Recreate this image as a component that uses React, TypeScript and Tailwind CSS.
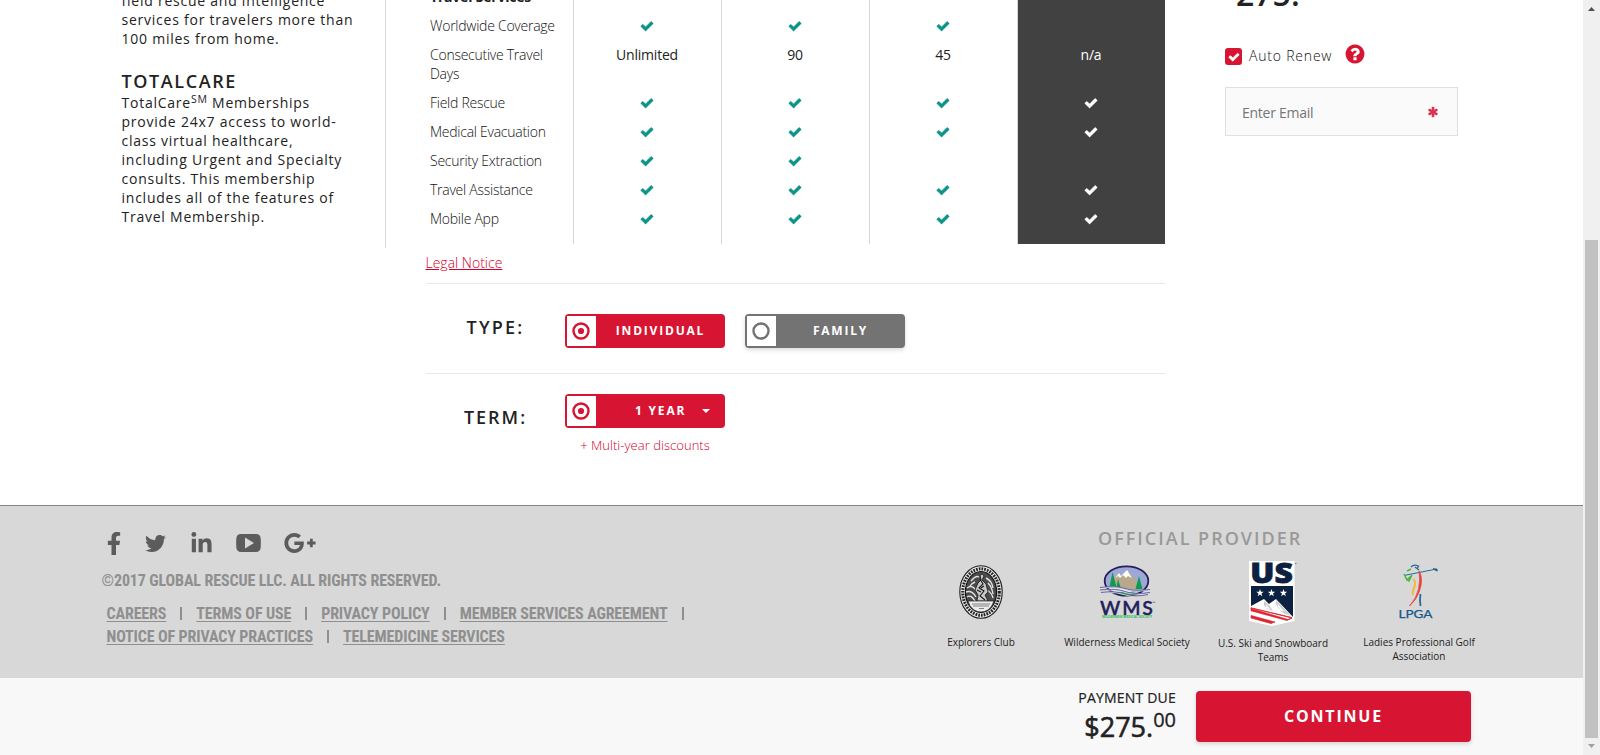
import React from 'react';
import { FaFacebookF, FaTwitter, FaLinkedinIn } from 'react-icons/fa';

const SANS = "font-['Open_Sans',sans-serif]";

function Check({ className, size = 14 }: { className: string; size?: number }) {
  return (
    <svg className={className} width={size} height={size} viewBox="0 0 1792 1792" fill="currentColor">
      <path d="M1671 566q0 40-28 68l-724 724-136 136q-28 28-68 28t-68-28l-136-136-362-362q-28-28-28-68t28-68l136-136q28-28 68-28t68 28l294 295 656-657q28-28 68-28t68 28l136 136q28 28 28 68z" stroke="currentColor" strokeWidth="60" />
    </svg>
  );
}

function Asterisk() {
  return (
    <svg width="12" height="12" viewBox="0 0 1792 1792" fill="#dc3450">
      <path d="M1546 1050q46 26 59.5 77.5t-12.5 97.5l-64 110q-26 46-77.5 59.5t-97.5-12.5l-266-153v307q0 52-38 90t-90 38h-128q-52 0-90-38t-38-90v-307l-266 153q-46 26-97.5 12.5t-77.5-59.5l-64-110q-26-46-12.5-97.5t59.500-77.500l266-154-266-154q-46-26-59.500-77.500t12.500-97.500l64-110q26-46 77.500-59.500t97.500 12.500l266 153v-307q0-52 38-90t90-38h128q52 0 90 38t38 90v307l266-153q46-26 97.500-12.500t77.500 59.500l64 110q26 46 12.500 97.500t-59.500 77.500l-266 154z" />
    </svg>
  );
}

function Question() {
  return (
    <svg width="22" height="22" viewBox="0 0 1792 1792" fill="#d71532">
      <path d="M1024 1376v-192q0-14-9-23t-23-9h-192q-14 0-23 9t-9 23v192q0 14 9 23t23 9h192q14 0 23-9t9-23zm256-672q0-88-55.5-163t-138.5-116-170-41q-243 0-371 213-15 24 8 42l132 100q7 6 19 6 16 0 25-12 53-68 86-92 34-24 86-24 48 0 85.500 26t37.500 59q0 38-20 61t-68 45q-63 28-115.500 86.500t-52.500 125.500v36q0 14 9 23t23 9h192q14 0 23-9t9-23q0-19 21.500-49.500t54.500-49.500q32-18 49-28.500t46-35 44.500-48 28-60.500 12.500-81zm384 192q0 209-103 385.500t-279.500 279.500-385.500 103-385.500-103-279.500-279.500-103-385.500 103-385.500 279.500-279.500 385.500-103 385.500 103 279.500 279.500 103 385.500z" />
    </svg>
  );
}

type Cell = boolean | string;
const rows: { label: string; cells: [Cell, Cell, Cell, Cell] }[] = [
  { label: 'Worldwide Coverage', cells: [true, true, true, false] },
  { label: 'Consecutive Travel Days', cells: ['Unlimited', '90', '45', 'n/a'] },
  { label: 'Field Rescue', cells: [true, true, true, true] },
  { label: 'Medical Evacuation', cells: [true, true, true, true] },
  { label: 'Security Extraction', cells: [true, true, false, false] },
  { label: 'Travel Assistance', cells: [true, true, true, true] },
  { label: 'Mobile App', cells: [true, true, true, true] },
];

function PlanTable() {
  const cellTone = [
    'border-l border-[#d8d8d8] text-[#222]',
    'border-l border-[#d8d8d8] text-[#222]',
    'border-l border-[#d8d8d8] text-[#222]',
    'border-l border-[#d8d8d8] bg-[#414141] text-white',
  ];
  const grid = 'grid grid-cols-[147px_148px_148px_148px_148px]';
  return (
    <div className="flex h-[244px] flex-col justify-end overflow-hidden text-[14px] leading-[19px]">
      <div className={grid + ' h-[28px] shrink-0'}>
        <div className="pt-[4px] pl-[4px] font-bold tracking-[-0.2px] text-[#222]">Travel Services</div>
        {cellTone.map((t, i) => <div key={i} className={t} />)}
      </div>
      {rows.map((r) => (
        <div key={r.label} className={grid + ' shrink-0'}>
          <div className="py-[5px] pr-2 pl-[4px] font-light tracking-[-0.26px] text-[#111]">{r.label}</div>
          {r.cells.map((c, i) => (
            <div key={i} className={cellTone[i] + ' flex justify-center py-[5px] pr-px tracking-[-0.2px]'}>
              {c === true ? (
                <Check className={i === 3 ? 'mt-[3px] text-white' : 'mt-[3px] text-[#0b9488]'} />
              ) : (
                c || null
              )}
            </div>
          ))}
        </div>
      ))}
      <div className={grid + ' h-[11px] shrink-0'}>
        <div />
        {cellTone.map((t, i) => <div key={i} className={t} />)}
      </div>
    </div>
  );
}

function Radio({ on }: { on: boolean }) {
  const color = on ? '#d71532' : '#737373';
  return (
    <span className="flex h-[30px] w-[29px] items-center pl-[5px] bg-white">
      <svg width="18" height="18" viewBox="0 0 18 18" fill="none">
        <circle cx="9" cy="9" r="7.500" stroke={color} strokeWidth="2.400" />
        {on && <circle cx="9" cy="9" r="3.100" fill={color} />}
      </svg>
    </span>
  );
}

function OptionButton({ label, on, caret }: { label: string; on: boolean; caret?: boolean }) {
  return (
    <button
      className={
        (on ? 'bg-[#d71532]' : 'bg-[#737373] shadow-[0_2px_4px_rgba(0,0,0,0.15)]') +
        ' flex h-[34px] w-[160px] items-center rounded-[4px] pl-[2px] text-[12px] font-bold tracking-[1.8px] text-white'
      }
    >
      <Radio on={on} />
      <span className={caret ? 'flex flex-1 items-center pl-[39px]' : 'flex-1 text-center'}>
        {label}
        {caret && (
          <svg className="ml-[16px]" width="8" height="4" viewBox="0 0 8 4">
            <path d="M0 0h8L4 4z" fill="#fff" />
          </svg>
        )}
      </span>
    </button>
  );
}

function FooterLink({ children, bar = true }: { children: string; bar?: boolean }) {
  return (
    <>
      <a className="whitespace-nowrap underline decoration-1 underline-offset-2">{children}</a>
      {bar && <span className="mx-[14px] h-[13px] w-[2px] shrink-0 bg-[#8f8f8f]" />}
    </>
  );
}

function ExplorersLogo() {
  return (
    <svg width="44" height="54" viewBox="0 0 44 54">
      <ellipse cx="22" cy="27" rx="21.2" ry="26.3" fill="#e6e6e6" stroke="#1c1c1c" strokeWidth="1.1" />
      <ellipse cx="22" cy="27" rx="18.3" ry="23.2" fill="none" stroke="#222" strokeWidth="3" strokeDasharray="1.7 1.1" />
      <ellipse cx="22" cy="27" rx="15.600" ry="20.500" fill="#4b4b4b" stroke="#111" strokeWidth="1.2" />
      <path d="M8 23q4-3 7 0t6 6M7 27q6-2 10 5M8 32q4-3 8 4M12 16q5-6 8-4M27 13q6 3 7 10M29 18q4 4 5 11M28 25q5 3 6 8M16 17q-4 2-5 4" stroke="#e4e4e4" strokeWidth="1.4" fill="none" />
      <path d="M21 10q3-2 4 1l-2 4 4 4 2 8-3 3 3 6H18l1-6-3-5 3-7 3-3z" fill="#c8c8c8" stroke="#161616" strokeWidth=".8" />
      <path d="M21 14l3 5-4 4 5 3-4 5 5 4M18 25l4 2M25 21l-3 2" stroke="#181818" strokeWidth="1.1" fill="none" />
      <path d="M9 36h26q-2 6-6 9-7 4-14 0-5-4-6-9z" fill="#ececec" stroke="#222" strokeWidth=".7" />
      <path d="M13 39h18M14 41h16M20 43.500h5" stroke="#666" strokeWidth=".8" />
    </svg>
  );
}

function WmsLogo() {
  return (
    <svg className="ml-[4px]" width="58" height="54" viewBox="0 0 58 54">
      <defs>
        <clipPath id="wmsOval"><ellipse cx="26.500" cy="16" rx="21.800" ry="14.700" /></clipPath>
      </defs>
      <g clipPath="url(#wmsOval)">
        <rect x="4" y="0" width="46" height="32" fill="#9ea8d6" />
        <path d="M11 24V17l7-9 3 3 6-6 8 9 3 7v4z" fill="#b9a98c" />
        <path d="M15 13l4-5 2 3 6-6 5 8-4-2-2 2-3-3-3 3-2-2z" fill="#fff" />
        <path d="M12.500 7l4 15h-7zM18 14l2.500 8h-4zM39 11l3.500 13h-7z" fill="#0d9b4e" />
        <path d="M4 22q16-2 24 3t22 0v8H4z" fill="#e8ebf3" />
        <path d="M14 27q12-1 24 1l-5 4H20z" fill="#1fc13c" />
      </g>
      <ellipse cx="26.500" cy="16" rx="21.800" ry="14.700" fill="none" stroke="#24205e" strokeWidth="1.800" />
      <path d="M0 23q16-2 25 1t25 1M0 25.500q16-2 25 1.500t25 1M1 28q14-2 24 1.500t23 .5" stroke="#d8d8e6" strokeWidth="1.400" fill="none" />
      <path d="M0 22.500q16-2 25 1t25 1M0 25q16-2 25 1.500t25 1M1 27.500q14-2 24 1.500t23 .5" stroke="#37347c" strokeWidth=".7" fill="none" />
      <text x="0" y="50" textLength="53" fontFamily="Lato, sans-serif" fontWeight="600" fontSize="19.500" fill="#24205e" stroke="#24205e" strokeWidth=".3">WMS</text>
      <text x="52.500" y="39" fontFamily="Open Sans, sans-serif" fontSize="3.500" fill="#24205e">™</text>
      <text x="2" y="53.400" textLength="50" lengthAdjust="spacingAndGlyphs" fontFamily="Open Sans, sans-serif" fontWeight="700" fontSize="3" fill="#20c050">WILDERNESS MEDICAL SOCIETY</text>
    </svg>
  );
}

function UsSkiLogo() {
  const star = 'M0-3.900L.95-1.250 3.700-1.200 1.500.5 2.300 3.200 0 1.600-2.300 3.200-1.500.5-3.700-1.200-.95-1.250z';
  return (
    <svg width="48" height="65" viewBox="0 0 48 65">
      <path d="M0 0h45.500v60L23 65 0 60z" fill="#fff" />
      <text x="1.300" y="22.300" textLength="42.500" lengthAdjust="spacingAndGlyphs" fontFamily="Open Sans, sans-serif" fontWeight="800" fontSize="28" fill="#0c2140" stroke="#0c2140" strokeWidth=".8">US</text>
      <path d="M46 2.500h1.500" stroke="#667" strokeWidth=".8" />
      <path d="M2 25h42v31L2 46z" fill="#0c2140" />
      <g fill="#fff">
        <path d={star} transform="translate(11 32)" />
        <path d={star} transform="translate(22.500 32)" />
        <path d={star} transform="translate(34.500 32)" />
      </g>
      <path d="M2 45l13-7 5 5 7-5 17 18v3L23 63 2 57z" fill="#fff" />
      <path d="M15 40l5 4 4 6-6-2-3-4zM27 39l15 16-8-3-5-5-2-4z" fill="#c9cac9" />
      <path d="M17 43l5 6-5-2zM28 42l8 9-6-2z" fill="#f6f6f6" />
      <path d="M2 47.500l37 11 4-2L2 46.800zM2 47l41 10-5 2.500L2 49.800zM2 54.500l24 6.500-4 1.500L2 57z" fill="#dc2430" stroke="#dc2430" strokeWidth=".7" />
    </svg>
  );
}

function LpgaLogo() {
  return (
    <svg className="ml-[2px]" width="42" height="56" viewBox="0 0 42 56" fill="none">
      <path d="M5 11.500L35 5.500" stroke="#26699a" strokeWidth="1" />
      <path d="M34 4.500l4 .5.5 2-2-.5z" fill="#185a8c" stroke="#185a8c" strokeWidth=".6" />
      <path d="M12 3q3-3 7-1M16 3l4 3M20 1.500l-2 3.500" stroke="#26699a" strokeWidth="1.200" />
      <path d="M8 7l4-2M5 10l3 6 4-4M7 14l3 3 3-6" stroke="#4db544" strokeWidth="1.500" />
      <path d="M14.500 15q3 4 .5 9-2 4-1 7" stroke="#f0bd38" strokeWidth="2" />
      <path d="M20.500 7q4 9 0 20-3 9-10 15 7-8 9-17 2-9 .5-18z" fill="#e9403a" stroke="#e9403a" strokeWidth=".7" />
      <path d="M21.500 30q-1 6 0 12" stroke="#26699a" strokeWidth="1.800" />
      <text x="-.5" y="53.500" textLength="34" lengthAdjust="spacingAndGlyphs" fontFamily="Lato, sans-serif" fontSize="10.800" fill="#15588c" stroke="#15588c" strokeWidth=".25">LPGA</text>
    </svg>
  );
}

function Partner({ logo, name, className = 'pt-0' }: { logo: React.ReactNode; name: string; className?: string }) {
  return (
    <div className={'flex w-[146px] flex-col items-center ' + className}>
      <div className="flex h-[70px] items-center">{logo}</div>
      <div className="mt-[8px] w-[130px] text-center text-[10px] leading-[14px] text-[#222]">{name}</div>
    </div>
  );
}

export default function App() {
  return (
    <div className={'flex h-[755px] w-[1600px] overflow-hidden bg-white text-[#222] ' + SANS}>
      <div className="flex w-[1583px] flex-col">
        <main className="flex h-[505px] shrink-0 items-start overflow-hidden pl-[121px]">
          <aside className="flex h-[248px] w-[265px] shrink-0 flex-col justify-end overflow-hidden border-r border-[#d8d8d8] pb-[22px] pl-[0.5px] text-[14px] leading-[19px] tracking-[0.76px]">
            <p className="w-[250px]">field rescue and intelligence services for travelers more than 100 miles from home.</p>
            <h2 className="mt-[22px] text-[18px] leading-[22px] font-semibold tracking-[1.6px]">TOTALCARE</h2>
            <p className="mt-px w-[235px]">
              TotalCare<sup className="text-[10.5px]">SM</sup> Memberships provide 24x7 access to world-class virtual healthcare, including Urgent and Specialty consults. This membership includes all of the features of Travel Membership.
            </p>
          </aside>

          <section className="ml-[40px] w-[739px] shrink-0">
            <PlanTable />
            <div className="h-[40px] border-b border-[#e8e8e8] pt-[9px] text-[14px] leading-[19px]">
              <a className="-ml-[0.5px] font-light text-[#d2002a] underline">Legal Notice</a>
            </div>
            <div className="flex h-[90px] border-b border-[#e8e8e8] pt-[30px]">
              <div className="w-[139px] pt-[2px] text-center text-[18px] leading-[22px] font-semibold tracking-[2.2px]">TYPE:</div>
              <div className="flex gap-5">
                <OptionButton label="INDIVIDUAL" on />
                <OptionButton label="FAMILY" on={false} />
              </div>
            </div>
            <div className="flex pt-[20px]">
              <div className="w-[139px] pt-[12px] text-center text-[18px] leading-[22px] font-semibold tracking-[2px]">TERM:</div>
              <div className="w-[160px]">
                <OptionButton label="1 YEAR" on caret />
                <div className="mt-[8px] text-center text-[13px] leading-[19px] font-light text-[#d2002a] tracking-[0.04px]">+ Multi-year discounts</div>
              </div>
            </div>
          </section>

          <section className="ml-[60px] w-[233px]">
            <div className="-mt-[31px] h-[76px] pl-[11px] text-[32px] leading-[50px] font-semibold">275.</div>
            <div className="flex h-[19px]">
              <span className="mt-[3px] flex h-[17px] w-[17px] items-center justify-center rounded-[3px] bg-[#d71532]">
                <Check className="text-white" size={12} />
              </span>
              <span className="ml-[7px] w-[86px] pt-[1px] text-[14px] leading-[19px] font-light tracking-[0.8px] text-[#111]">Auto Renew</span>
              <span className="-mt-[2px] ml-[9px]"><Question /></span>
            </div>
            <div className="mt-[23px] flex h-[49px] items-center justify-between border border-[#e0e0e0] bg-[#fafafa] pr-[18px] pl-[16px] text-[14px] tracking-[-0.26px] text-[#757575]">
              <span className="pt-[2px]">Enter Email</span>
              <Asterisk />
            </div>
          </section>
        </main>

        <footer className="flex h-[173px] shrink-0 border-t border-[#858585] bg-[#d8d8d8]">
          <div className="w-[908px] pl-[101.5px]">
            <div className="flex h-[53px] items-end text-[#5c5c5c]">
              <div className="flex h-[32px] w-full items-center pb-0">
                <FaFacebookF className="ml-[4px] h-[23px] w-[16px]" />
                <FaTwitter className="ml-[23px] h-[21px] w-[21px]" />
                <FaLinkedinIn className="ml-[24px] h-[23px] w-[23px]" />
                <svg className="ml-[23px]" width="25" height="18" viewBox="0 0 25 18">
                  <path fillRule="evenodd" fill="currentColor" d="M5 0Q12.500-.4 20 0q4.200.2 4.600 4 .5 5 0 10-.4 3.700-4.600 4-7.500.3-15 0-4.200-.3-4.600-4-.5-5 0-10Q.8.200 5 0zM9 3.500v11l9-5.500z" />
                </svg>
                <svg className="ml-[22px]" width="34" height="34" viewBox="0 0 24 24" fill="currentColor">
                  <path d="M23,11H21V9H19V11H17V13H19V15H21V13H23M8,11V13.4H12C11.8,14.4 10.8,16.4 8,16.4C5.6,16.4 3.7,14.4 3.7,12C3.7,9.6 5.6,7.6 8,7.6C9.4,7.6 10.3,8.2 10.8,8.7L12.7,6.9C11.5,5.7 9.9,5 8,5C4.1,5 1,8.1 1,12C1,15.9 4.1,19 8,19C12,19 14.7,16.2 14.7,12.2C14.7,11.7 14.7,11.4 14.6,11H8Z" />
                </svg>
              </div>
            </div>
            <div className="font-['Roboto_Condensed',Roboto,sans-serif] text-[16px] leading-[23px] font-bold tracking-[-0.13px] text-[#8f8f8f] [font-stretch:75%]">
              <div className="mt-[10px]">©2017 GLOBAL RESCUE LLC. ALL RIGHTS RESERVED.</div>
              <div className="mt-[10px] flex items-center pl-[5px]">
                <FooterLink>CAREERS</FooterLink>
                <FooterLink>TERMS OF USE</FooterLink>
                <FooterLink>PRIVACY POLICY</FooterLink>
                <FooterLink>MEMBER SERVICES AGREEMENT</FooterLink>
              </div>
              <div className="flex items-center pl-[5px]">
                <FooterLink>NOTICE OF PRIVACY PRACTICES</FooterLink>
                <FooterLink bar={false}>TELEMEDICINE SERVICES</FooterLink>
              </div>
            </div>
          </div>
          <div className="w-[584px]">
            <h3 className="pt-[20px] pl-[190px] text-[18px] leading-[24px] font-semibold tracking-[2px] text-[#999]">OFFICIAL PROVIDER</h3>
            <div className="mt-[7px] flex">
              <Partner logo={<ExplorersLogo />} name="Explorers Club" />
              <Partner logo={<WmsLogo />} name="Wilderness Medical Society" />
              <Partner logo={<UsSkiLogo />} name="U.S. Ski and Snowboard Teams" className="pt-px" />
              <Partner logo={<LpgaLogo />} name="Ladies Professional Golf Association" />
            </div>
          </div>
        </footer>

        <div className="flex h-[77px] shrink-0 justify-end bg-[#f8f8f8] pr-[112px]">
          <div className="text-right">
            <div className="pt-[10px] text-[14px] leading-[20px] tracking-[0.2px] [-webkit-text-stroke:0.2px_#222]">PAYMENT DUE</div>
            <div className="flex items-start justify-end">
              <span className="text-[27px] leading-[37px] [-webkit-text-stroke:0.6px_#222]">$275.</span>
              <span className="text-[20px] leading-[24px] [-webkit-text-stroke:0.3px_#222]">00</span>
            </div>
          </div>
          <button className="mt-[13px] ml-[20px] h-[51px] w-[275px] rounded-[4px] bg-[#d71532] pb-[2px] text-[16px] font-bold tracking-[1.8px] text-white shadow-[0_2px_4px_rgba(0,0,0,0.15)]">
            CONTINUE
          </button>
        </div>
      </div>

      <div className="flex h-full w-[17px] flex-col items-center bg-[#f0f0f0]">
        <svg className="mt-[7px]" width="7" height="4" viewBox="0 0 7 4"><path d="M3.500 0L7 4H0z" fill="#505050" /></svg>
        <div className="mt-[229px] h-[498px] w-[13px] bg-[#c1c1c1]" />
        <svg className="mt-[6px]" width="7" height="4" viewBox="0 0 7 4"><path d="M0 0h7L3.500 4z" fill="#a0a0a0" /></svg>
      </div>
    </div>
  );
}
